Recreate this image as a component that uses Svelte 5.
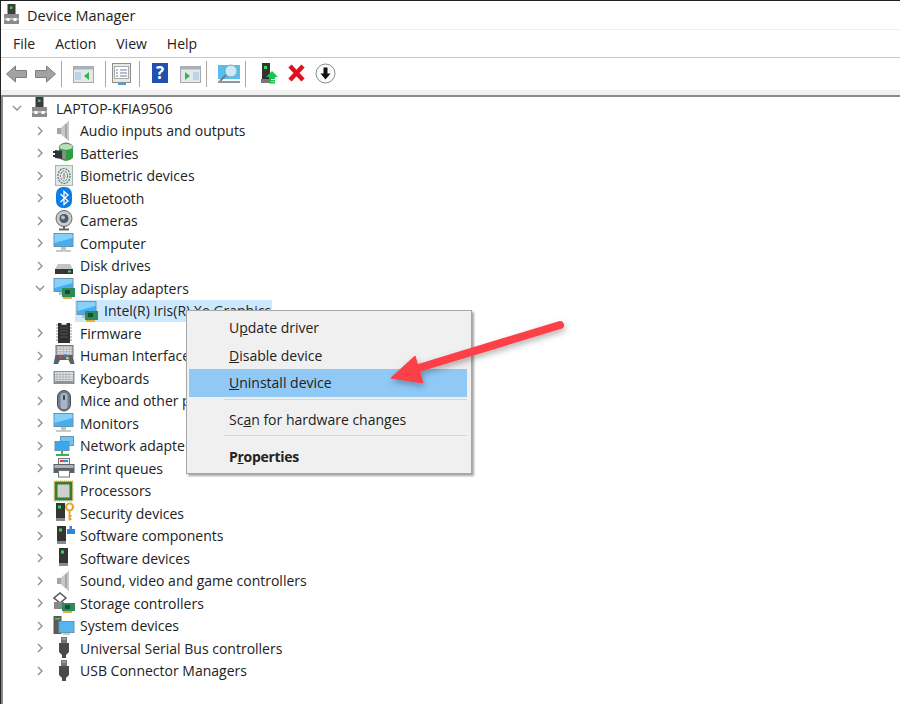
<script>
  const devices = [
    { name: 'Audio inputs and outputs', icon: 'speaker' },
    { name: 'Batteries', icon: 'battery' },
    { name: 'Biometric devices', icon: 'finger' },
    { name: 'Bluetooth', icon: 'bluetooth' },
    { name: 'Cameras', icon: 'camera' },
    { name: 'Computer', icon: 'monitor' },
    { name: 'Disk drives', icon: 'disk' },
    { name: 'Display adapters', icon: 'adapter', open: true },
    { name: 'Intel(R) Iris(R) Xe Graphics', icon: 'adapter', child: true },
    { name: 'Firmware', icon: 'chip' },
    { name: 'Human Interface Devices', icon: 'hid' },
    { name: 'Keyboards', icon: 'keyboard' },
    { name: 'Mice and other pointing devices', icon: 'mouse' },
    { name: 'Monitors', icon: 'monitor' },
    { name: 'Network adapters', icon: 'network' },
    { name: 'Print queues', icon: 'printer' },
    { name: 'Processors', icon: 'cpu' },
    { name: 'Security devices', icon: 'security' },
    { name: 'Software components', icon: 'component' },
    { name: 'Software devices', icon: 'tower' },
    { name: 'Sound, video and game controllers', icon: 'speaker' },
    { name: 'Storage controllers', icon: 'storage' },
    { name: 'System devices', icon: 'system' },
    { name: 'Universal Serial Bus controllers', icon: 'usb' },
    { name: 'USB Connector Managers', icon: 'usb' }
  ];
</script>

{#snippet pc()}
  <rect x="6.500" y="0" width="8" height="11" fill="#3c3c3c" />
  <rect x="9" y="2.500" width="2.500" height="2.500" fill="#35d05a" />
  <path d="M3 10h15v10H3z" fill="#8b8b8b" />
  <path d="M3 14h15v2H3z" fill="#bdbdbd" />
  <rect x="5.500" y="14" width="3" height="3" fill="#fff" />
  <rect x="12.500" y="14" width="3" height="3" fill="#fff" />
{/snippet}

{#snippet screen()}
  <rect x="0.500" y="1" width="20" height="14" fill="#6d93aa" />
  <rect x="1.500" y="2" width="18" height="12" fill="#45aef0" />
  <path d="M1.500 2h18v4L1.500 11z" fill="#86d0fa" />
{/snippet}

{#snippet tower(x = 6)}
  <rect x={x} y="1" width="9" height="15" fill="#343434" />
  <rect x={x + 2} y="3.500" width="3" height="3" fill="#27e05a" />
  <rect x={x} y="16" width="9" height="3" fill="#8a8a8a" />
{/snippet}

{#snippet icon(name)}
  <svg class="icon" viewBox="0 0 22 22" width="22" height="22">
    {#if name === 'speaker'}
      <path d="M4 8h4l8-7v20l-8-7H4z" fill="#a2a5a5" />
      <path d="M8 8l8-7v20l-8-7z" fill="#c6c8c8" />
      <path d="M13 4v14" stroke="#9a9d9d" stroke-width="1.500" />
    {:else if name === 'battery'}
      <path d="M8 3q5-4 10 0" stroke="#555" fill="none" />
      <ellipse cx="13" cy="5" rx="7" ry="3.500" fill="#b5dfb6" stroke="#555" stroke-width=".6" />
      <path d="M6 6q7 4 14 0v10q-7 6-14 0z" fill="#2f9e3f" />
      <path d="M2 8l7 1v8l-7-1z" fill="#333" />
      <path d="M0 10h3M0 14h3" stroke="#333" stroke-width="2" />
      <path d="M9 9h4v8H9z" fill="#8a8a8a" />
    {:else if name === 'finger'}
      <rect x="2.500" y="0.500" width="17" height="20" fill="#dde9e4" stroke="#a3b8b1" />
      <ellipse cx="11" cy="11" rx="6" ry="7.500" fill="none" stroke="#6b6b6b" stroke-width="1.200" stroke-dasharray="2 1" />
      <ellipse cx="11" cy="11" rx="3.500" ry="5" fill="none" stroke="#6b6b6b" stroke-dasharray="2 1" />
      <path d="M11 8v6" stroke="#6b6b6b" />
    {:else if name === 'bluetooth'}
      <rect x="3" y="0" width="16" height="21" rx="7" fill="#0c7de6" />
      <path d="M7.500 7l7.500 7-4 3.500v-13l4 3.500-7.500 7" fill="none" stroke="#fff" stroke-width="1.300" />
    {:else if name === 'camera'}
      <circle cx="11" cy="8.500" r="8" fill="#cacaca" stroke="#666" />
      <circle cx="11" cy="8.500" r="4.500" fill="#4c5a66" />
      <circle cx="10" cy="7.500" r="2" fill="#a9c0d0" />
      <path d="M11 16v3M6 19.500h10" stroke="#666" stroke-width="2" />
    {:else if name === 'monitor'}
      {@render screen()}
      <path d="M8 15h5v3H8z" fill="#b9c4cc" />
      <path d="M3 18h15v2H3z" fill="#c3ccd2" />
    {:else if name === 'disk'}
      <path d="M5 9h12l3 5v5H2v-5z" fill="#c4c4c4" />
      <rect x="2" y="14" width="18" height="5" fill="#353535" />
      <rect x="15" y="15.500" width="3" height="2" fill="#3bd05f" />
    {:else if name === 'adapter'}
      {@render screen()}
      <path d="M6 15h5v3H6z" fill="#b9c4cc" />
      <rect x="9" y="11" width="13" height="9" fill="#2f8a5a" />
      <rect x="12" y="13" width="5" height="4" fill="#1b4d34" />
      <rect x="10" y="20" width="9" height="2" fill="#e2b23c" />
    {:else if name === 'chip'}
      <path d="M3 3h16M3 6h16M3 9h16M3 12h16M3 15h16M3 18h16" stroke="#8d8d8d" />
      <path d="M5 1h3.500v2h5V1H17v20H5z" fill="#2f2f2f" />
      <path d="M7 6h8M7 9h8M7 12h8M7 15h8" stroke="#555" />
    {:else if name === 'hid'}
      <rect x="3" y="0.500" width="17" height="11" fill="#b7bbc0" stroke="#6c7278" />
      <path d="M5 3h13M5 5.500h13M5 8h13" stroke="#eef0f2" stroke-dasharray="2 1" />
      <path d="M0.500 19l2-9h17l2 9h-4l-2-4H7l-2 4z" fill="#56616c" />
      <circle cx="8" cy="12" r="1.500" fill="#e0473a" />
      <circle cx="12" cy="10.500" r="1.500" fill="#3a7be0" />
      <circle cx="14.500" cy="13" r="1.500" fill="#e3c33a" />
    {:else if name === 'keyboard'}
      <rect x="0.500" y="4" width="21" height="13" fill="#8f9397" />
      <rect x="2" y="5" width="18" height="9" fill="#e2e4e6" />
      <path d="M2 7.500h18M2 10h18M2 12.500h18" stroke="#a9adb1" stroke-width=".8" />
      <path d="M4 5v9M7 5v9M10 5v9M13 5v9M16 5v9" stroke="#a9adb1" stroke-width=".8" />
    {:else if name === 'mouse'}
      <rect x="4.500" y="0.500" width="13" height="20.500" rx="6.500" fill="#6f7e8f" stroke="#444c55" />
      <rect x="7.500" y="3" width="7" height="16" rx="3.500" fill="#a8b5c3" />
      <rect x="10" y="5" width="2" height="5" rx="1" fill="#39424c" />
    {:else if name === 'network'}
      <rect x="7" y="1" width="14" height="10" fill="#6d93aa" />
      <rect x="8" y="2" width="12" height="8" fill="#72c4f4" />
      <rect x="1.500" y="6" width="15" height="10" fill="#6d93aa" />
      <rect x="2.500" y="7" width="13" height="8" fill="#3aa8ee" />
      <path d="M9 16v3M3 20h13" stroke="#3fb05a" stroke-width="2" />
    {:else if name === 'printer'}
      <rect x="5.500" y="1.500" width="11" height="6" fill="#eee" stroke="#777" />
      <path d="M7 4h3" stroke="#d8463a" stroke-width="2" />
      <path d="M10 4h5" stroke="#2d8fd8" stroke-width="2" />
      <path d="M0.500 7h21v9h-21z" fill="#5b6066" />
      <path d="M1.500 8h19v3h-19z" fill="#b0b5ba" />
      <rect x="5.500" y="13.500" width="11" height="6.500" fill="#fff" stroke="#777" />
    {:else if name === 'cpu'}
      <rect x="1.500" y="1.500" width="18" height="19" fill="#3b7a34" />
      <rect x="1" y="1" width="19" height="20" fill="none" stroke="#d2a93a" stroke-dasharray="1 1" />
      <rect x="4.500" y="4.500" width="12" height="13" fill="#cdd0cd" />
    {:else if name === 'security'}
      {@render tower(3)}
      <circle cx="16.500" cy="5" r="3.500" fill="none" stroke="#e0a92e" stroke-width="2.200" />
      <path d="M16.500 8.500v10M16.500 14h2M16.500 17h2" stroke="#e0a92e" stroke-width="2" />
    {:else if name === 'component'}
      {@render tower(4)}
      <path d="M14 4h2.500V1h2.500v3h3v5h-8z" fill="#2f86d8" />
    {:else if name === 'tower'}
      {@render tower(6)}
    {:else if name === 'storage'}
      <path d="M7 1l6 5-6 5-6-5z" fill="#fff" stroke="#555" stroke-width="1.500" />
      <path d="M1 10h10v7H1z" fill="#888" />
      <rect x="9" y="11" width="13" height="8" fill="#2f8a5a" />
      <rect x="12" y="13" width="5" height="4" fill="#1b4d34" />
      <rect x="10" y="19" width="9" height="2" fill="#e2b23c" />
    {:else if name === 'system'}
      <rect x="0.500" y="1" width="8" height="18" fill="#5a5a5a" />
      <rect x="2" y="3" width="5" height="1.500" fill="#3bd05f" />
      <rect x="5.500" y="6" width="16" height="12" fill="#6d93aa" />
      <rect x="6.500" y="7" width="14" height="10" fill="#56b4ee" />
      <path d="M10 18h7v2h-7z" fill="#c3ccd2" />
    {:else if name === 'usb'}
      <rect x="8" y="0" width="6" height="6" fill="#777" />
      <path d="M9.500 2h1M11.500 2h1" stroke="#fff" />
      <path d="M6 6h10v9l-3 3v3H9v-3l-3-3z" fill="#4a4a4a" />
    {/if}
  </svg>
{/snippet}

<div class="window">
  <header class="title">
    <svg class="title-icon" viewBox="0 0 22 22" width="22" height="22">{@render pc()}</svg>
    <span>Device Manager</span>
  </header>

  <nav class="menubar">
    <span>File</span><span>Action</span><span>View</span><span>Help</span>
  </nav>

  <div class="toolbar">
    <svg width="29" height="24" viewBox="0 0 29 24"><path d="M0.500 12l9-8v4.500h11v7h-11V20z" fill="#a3a3a3" stroke="#7d7d7d" /></svg>
    <svg width="26" height="24" viewBox="0 0 26 24"><path d="M20.500 12l-9-8v4.500h-11v7h11V20z" fill="#a3a3a3" stroke="#7d7d7d" /></svg>
    <i class="sep"></i>
    <svg width="43" height="24" viewBox="0 0 43 24">
      <rect x="11.500" y="4.500" width="20" height="16" fill="#e4e8ea" stroke="#a3abb0" />
      <rect x="11.500" y="4.500" width="20" height="3" fill="#a9b2b8" />
      <path d="M13 10h6v8h-6z" fill="#bcd4e8" />
      <path d="M27 10l-5 4 5 4z" fill="#2eb84a" />
    </svg>
    <i class="sep"></i>
    <svg width="33" height="24" viewBox="0 0 33 24">
      <rect x="6.500" y="1.500" width="18" height="19" fill="#e8e8e8" stroke="#8d8d8d" />
      <rect x="8.500" y="4.500" width="14" height="12" fill="#fff" stroke="#aaa" />
      <path d="M10 8h2M14 8h7M10 11h2M14 11h7M10 14h2M14 14h7" stroke="#6a7f92" />
      <path d="M12 21h8v2h-8z" fill="#41a4ea" />
    </svg>
    <i class="sep"></i>
    <svg width="40" height="24" viewBox="0 0 40 24">
      <rect x="12" y="1" width="16" height="20" fill="#2350ae" />
      <text x="20" y="17" class="help-mark">?</text>
    </svg>
    <svg width="26" height="24" viewBox="0 0 26 24">
      <rect x="0.500" y="4.500" width="20" height="16" fill="#e4e8ea" stroke="#a3abb0" />
      <rect x="0.500" y="4.500" width="20" height="3" fill="#a9b2b8" />
      <path d="M5 10l5 4-5 4z" fill="#2eb84a" />
      <path d="M13 10h6v8h-6z" fill="#bcd4e8" />
    </svg>
    <i class="sep"></i>
    <svg width="38" height="24" viewBox="0 0 38 24">
      <rect x="11" y="3" width="22" height="14" fill="#58bdf0" />
      <circle cx="24" cy="9" r="6" fill="#cdeafa" stroke="#8aa" />
      <path d="M19 13l-6 6" stroke="#778" stroke-width="2" />
      <path d="M11 20h22" stroke="#8a9aa5" stroke-width="2" />
    </svg>
    <i class="sep"></i>
    <svg width="42" height="24" viewBox="0 0 42 24">
      <rect x="16" y="1" width="8" height="16" fill="#333" />
      <rect x="18" y="4" width="3" height="3" fill="#27e05a" />
      <rect x="15" y="17" width="10" height="4" fill="#777" />
      <path d="M26 9l6 6h-3v2h-6v-2h-3z" fill="#19c44a" />
      <path d="M23 18h6v1.500h-6zM23 20h6v1.500h-6z" fill="#19c44a" />
    </svg>
    <svg width="27" height="24" viewBox="0 0 27 24"><path d="M2 4l13 14M15 4L2 18" stroke="#e0101e" stroke-width="4.500" /></svg>
    <svg width="22" height="24" viewBox="0 0 22 24">
      <circle cx="10.500" cy="11.500" r="9.500" fill="#fbfbfb" stroke="#8a8a8a" />
      <path d="M8.500 5.500h4v6h3l-5 6-5-6h3z" fill="#111" />
    </svg>
  </div>
  <div class="band"></div>

  <main class="tree">
    <div class="row root">
      <svg class="chevron" viewBox="0 0 10 10" width="10" height="10"><path d="M1 3l4 4 4-4" /></svg>
      <svg class="icon" viewBox="0 0 22 22" width="22" height="22">{@render pc()}</svg>
      <span>LAPTOP-KFIA9506</span>
    </div>
    {#each devices as d}
      <div class="row" class:child={d.child}>
        {#if !d.child}
          <svg class="chevron" viewBox="0 0 10 10" width="10" height="10">
            <path d={d.open ? 'M1 3l4 4 4-4' : 'M3 1l4 4-4 4'} />
          </svg>
        {/if}
        {@render icon(d.icon)}
        <span>{d.name}</span>
      </div>
    {/each}
  </main>

  <div class="menu">
    <div class="item"><span>U<u>p</u>date driver</span></div>
    <div class="item"><span><u>D</u>isable device</span></div>
    <div class="item active"><span><u>U</u>ninstall device</span></div>
    <hr class="first" />
    <div class="item"><span>Sc<u>a</u>n for hardware changes</span></div>
    <hr class="second" />
    <div class="item bold"><span>P<u>r</u>operties</span></div>
  </div>

  <svg class="arrow" width="900" height="704" viewBox="0 0 900 704">
    <defs>
      <filter id="drop" x="-20%" y="-20%" width="140%" height="160%">
        <feDropShadow dx="1" dy="3" stdDeviation="3" flood-color="#000" flood-opacity=".3" />
      </filter>
    </defs>
    <g filter="url(#drop)">
      <path d="M560 325L412 370" stroke="#fb3f47" stroke-width="8" stroke-linecap="round" />
      <path d="M391 378L415 356L423 383z" fill="#fb3f47" stroke="#fb3f47" stroke-linejoin="round" />
    </g>
  </svg>
</div>

<style>
  :global(body) {
    margin: 0;
    background: #fff;
  }

  .window {
    position: relative;
    width: 900px;
    height: 704px;
    overflow: hidden;
    box-sizing: border-box;
    border-top: 1px solid #222;
    border-left: 1px solid #222;
    font-family: "Open Sans", "Noto Sans", sans-serif;
    font-size: 14px;
    color: #222;
  }

  .title {
    display: flex;
    align-items: center;
    gap: 4px;
    height: 28px;
    font-size: 14.500px;
  }

  .title-icon {
    flex: none;
  }

  .menubar {
    display: flex;
    gap: 20px;
    align-items: center;
    height: 27px;
    padding-left: 12px;
    border-top: 1px solid #eee;
    border-bottom: 1px solid #c8c8c8;
  }

  .toolbar {
    display: flex;
    align-items: center;
    height: 32px;
    padding-left: 5px;
  }

  .toolbar svg {
    flex: none;
  }

  .sep {
    flex: none;
    width: 1px;
    height: 26px;
    background: #a9a9a9;
  }

  .help-mark {
    font-size: 17px;
    font-weight: 700;
    fill: #fff;
    text-anchor: middle;
  }

  .band {
    height: 5px;
    background: #f0f0f0;
  }

  .tree {
    box-sizing: border-box;
    height: 620px;
    padding: 0 0 0 8px;
    border-top: 2px solid #8a8a8a;
    border-left: 2px solid #8a8a8a;
  }

  .row {
    display: flex;
    align-items: center;
    height: 22.500px;
    padding-left: 24px;
    white-space: nowrap;
  }

  .row .chevron {
    flex: none;
    margin-right: 8px;
  }

  .row .icon {
    flex: none;
    margin-right: 5px;
  }

  .row.root {
    padding-left: 0;
  }

  .row.root .chevron {
    margin-left: 1px;
    margin-right: 7px;
  }

  .row.child {
    width: 197px;
    padding-left: 1px;
    margin-left: 64px;
    background: #cce8ff;
    box-sizing: border-box;
  }

  .row.child .icon {
    margin-right: 6px;
  }

  .chevron path {
    fill: none;
    stroke: #8c8c8c;
    stroke-width: 1.300;
  }

  .menu {
    position: absolute;
    left: 185px;
    top: 309px;
    box-sizing: border-box;
    width: 286px;
    height: 164px;
    padding: 3px 4px 0 2px;
    background: #f0f0f0;
    border: 1px solid #a6a6a6;
    box-shadow: 2px 2px 2px rgba(0, 0, 0, 0.35);
  }

  .item {
    display: flex;
    align-items: center;
    height: 27.500px;
    padding-left: 40px;
  }

  .item.active {
    background: #90c8f6;
  }

  .item.bold {
    font-weight: 700;
    letter-spacing: -0.300px;
  }

  .menu hr {
    height: 1px;
    margin: 0 0 0 35px;
    border: 0;
    background: #d8d8d8;
  }

  .menu hr.first {
    margin-top: 2.500px;
    margin-bottom: 6px;
  }

  .menu hr.second {
    margin-top: 1px;
    margin-bottom: 7px;
  }

  .arrow {
    position: absolute;
    left: -1px;
    top: -1px;
    pointer-events: none;
  }
</style>
